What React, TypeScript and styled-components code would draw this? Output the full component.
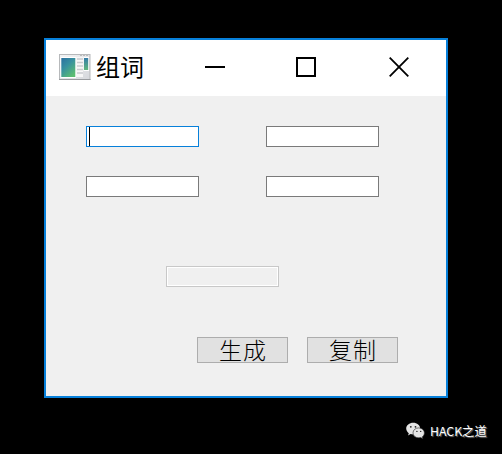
import React from "react";
import styled, { createGlobalStyle } from "styled-components";

const GlobalStyle = createGlobalStyle`
  *, *::before, *::after { box-sizing: border-box; }
  body { margin: 0; background: #000; overflow: hidden; }
`;

const Desktop = styled.main`
  width: 502px;
  height: 454px;
  padding: 38px 0 0 44px;
  background: #000;
  font-family: "Noto Sans CJK SC", sans-serif;
`;

const Window = styled.section`
  width: 404px;
  height: 360px;
  border: 2px solid #0780da;
  background: #f0f0f0;
`;

const TitleBar = styled.header`
  display: flex;
  align-items: center;
  height: 56px;
  padding: 0 0 2px 13px;
  background: #fff;
`;

const Title = styled.h1`
  margin: 0 0 0 5px;
  width: 50px;
  height: 54px;
  font-size: 24px;
  line-height: 52px;
  font-weight: 400;
  color: #000;
  white-space: nowrap;
`;

const Controls = styled.div`
  display: grid;
  grid-template-columns: 91px 93px 92px;
  margin-left: 23px;
`;

const ControlButton = styled.button`
  display: flex;
  align-items: center;
  justify-content: flex-start;
  height: 54px;
  padding: 0 0 0 36px;
  border: 0;
  background: transparent;
`;

const Body = styled.div`
  padding: 30px 0 0 40px;
`;

const Fields = styled.div`
  display: grid;
  grid-template-columns: 113px 113px;
  column-gap: 67px;
  row-gap: 29px;
`;

const Field = styled.div<{ $focused?: boolean }>`
  height: 21px;
  padding-left: 2px;
  border: 1px solid ${(p) => (p.$focused ? "#0780da" : "#7a7a7a")};
  background: #fff;
`;

const Caret = styled.div`
  width: 1px;
  height: 19px;
  background: #000;
`;

const ResultField = styled.div`
  width: 113px;
  height: 21px;
  margin: 69px 0 0 80px;
  border: 1px solid #c8c8c8;
  background: #f0f0f0;
  box-shadow: inset 0 0 0 1px #fff;
`;

const Actions = styled.div`
  display: flex;
  gap: 19px;
  margin: 50px 0 0 111px;
`;

const ActionButton = styled.button`
  width: 91px;
  height: 26px;
  padding: 0 0 2px 1px;
  border: 1px solid #adadad;
  background: #e1e1e1;
  color: #000;
  font-family: "Noto Sans CJK SC", sans-serif;
  font-size: 23px;
  font-weight: 300;
  line-height: 22px;
  letter-spacing: 1px;
`;

const Watermark = styled.footer`
  display: flex;
  align-items: center;
  gap: 5px;
  height: 20px;
  margin: 23px 0 0 362px;
  color: #fff;
  font-size: 12.3px;
  font-weight: 400;
  line-height: 20px;
  white-space: nowrap;
  text-shadow: 1px 1px 1px #777;
`;

const AppIcon = () => (
  <svg width="32" height="26" viewBox="0 0 32 26">
    <defs>
      <linearGradient id="frame" x1="0" y1="0" x2="1" y2="1">
        <stop offset="0" stopColor="#f3f4f5" />
        <stop offset="1" stopColor="#d6d8dc" />
      </linearGradient>
      <linearGradient id="pane" x1="0" y1="0" x2="0.7" y2="1">
        <stop offset="0" stopColor="#2b70a0" />
        <stop offset="0.45" stopColor="#3790a0" />
        <stop offset="1" stopColor="#5bbd72" />
      </linearGradient>
      <linearGradient id="strip" x1="0" y1="0" x2="0" y2="1">
        <stop offset="0" stopColor="#347da8" />
        <stop offset="1" stopColor="#60b77c" />
      </linearGradient>
    </defs>
    <rect x="0.5" y="0.5" width="30.5" height="25" fill="url(#frame)" stroke="#b7b9bb" />
    <path d="M0 25.5H31.5" stroke="#999c9f" />
    <path d="M21 1.5H30" stroke="#bbb" strokeDasharray="2 1" />
    <rect x="1.5" y="3" width="15.5" height="21" fill="#fff" />
    <rect x="2.3" y="4" width="14" height="19" fill="url(#pane)" />
    <rect x="17" y="3" width="7" height="20" fill="#f7f7f7" />
    <path
      d="M18 5H24M18 8.5H24M18 12H24M18 15.5H24M18 19H24"
      stroke="#c9cccf"
      strokeWidth="1.3"
    />
    <rect x="24.5" y="3" width="5.5" height="14" fill="#fff" />
    <rect x="25" y="4" width="4.2" height="12" fill="url(#strip)" />
  </svg>
);

const ChatIcon = () => (
  <svg width="19" height="18" viewBox="0 0 19 18">
    <path
      d="M7.2.8C3.4.8.2 3.3.2 6.6c0 1.9 1 3.5 2.6 4.6l-.8 2.2 2.6-1.4c.9.3 1.7.4 2.6.4 3.8 0 7-2.6 7-5.8S11 .8 7.2.8Z"
      fill="#e4e4e4"
    />
    <path
      d="M12.7 5.9c-3.3 0-5.7 2.2-5.7 5 0 2.7 2.4 4.9 5.7 4.9.7 0 1.4-.1 2-.3l2.2 1.3-.6-2c1.3-.9 2.1-2.3 2.1-3.9 0-2.8-2.4-5-5.7-5Z"
      fill="#e4e4e4"
      stroke="#222"
      strokeWidth="0.6"
    />
    <g fill="#222">
      <circle cx="4.8" cy="4.8" r="0.9" />
      <circle cx="9.5" cy="4.8" r="0.9" />
      <circle cx="10.9" cy="9.4" r="0.7" />
      <circle cx="14.7" cy="9.4" r="0.7" />
    </g>
  </svg>
);

export default function App() {
  return (
    <>
      <GlobalStyle />
      <Desktop>
        <Window>
          <TitleBar>
            <AppIcon />
            <Title>组词</Title>
            <Controls>
              <ControlButton aria-label="最小化">
                <svg width="20" height="20" viewBox="0 0 20 20">
                  <path d="M0 10H20" stroke="#000" strokeWidth="2" />
                </svg>
              </ControlButton>
              <ControlButton aria-label="最大化">
                <svg width="20" height="20" viewBox="0 0 20 20">
                  <rect x="1" y="1" width="18" height="18" fill="none" stroke="#000" strokeWidth="2" />
                </svg>
              </ControlButton>
              <ControlButton aria-label="关闭">
                <svg width="20" height="20" viewBox="0 0 20 20">
                  <path d="M0.7 0.7L19.3 19.3M19.3 0.7L0.7 19.3" stroke="#000" strokeWidth="1.8" />
                </svg>
              </ControlButton>
            </Controls>
          </TitleBar>
          <Body>
            <Fields>
              <Field $focused>
                <Caret />
              </Field>
              <Field />
              <Field />
              <Field />
            </Fields>
            <ResultField />
            <Actions>
              <ActionButton>生成</ActionButton>
              <ActionButton>复制</ActionButton>
            </Actions>
          </Body>
        </Window>
        <Watermark>
          <ChatIcon />
          <span>HACK之道</span>
        </Watermark>
      </Desktop>
    </>
  );
}
